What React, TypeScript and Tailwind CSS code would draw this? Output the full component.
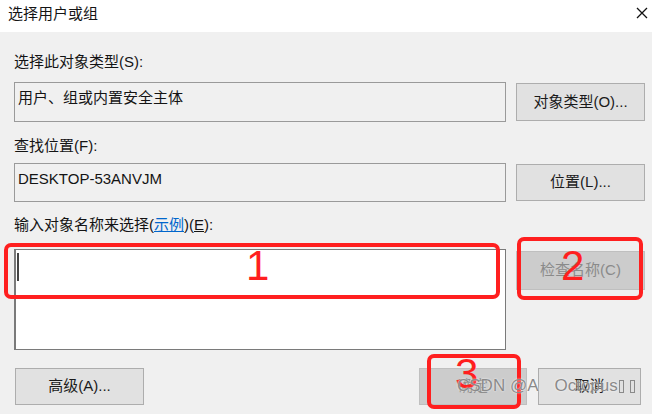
import React from "react";

const btn =
  "flex items-center justify-center border border-[#adadad] bg-[#e1e1e1] text-[15px] text-[#1a1a1a]";
const btnOff =
  "flex items-center justify-center border border-[#bfbfbf] bg-[#cccccc] text-[15px] text-[#8a8a8a]";
const roBox = "border border-[#9a9a9a] bg-[#f0f0f0] pl-[3px] pt-[5px] leading-[20px]";
const mark = "absolute border-4 border-[#ff1f1f] rounded-[7px]";
const num = "absolute text-[42px] leading-none text-[#ff1f1f]";

export default function App() {
  return (
    <div className="relative w-[652px] h-[414px] overflow-hidden bg-[#f0f0f0] font-['Liberation_Sans','Noto_Sans_CJK_SC',sans-serif] text-[15px] text-[#141414]">
      {/* title bar */}
      <div className="flex h-[32px] items-start justify-between bg-white pl-[8px] pr-[4px] pt-[4px]">
        <span className="leading-[20px]">选择用户或组</span>
        <svg width="12" height="12" viewBox="0 0 12 12" className="mt-[3px]">
          <path d="M1 1 L11 11 M11 1 L1 11" stroke="#111" strokeWidth="1.3" />
        </svg>
      </div>

      <div className="pl-[14px]">
        <div className="mt-[20px] leading-[20px]">选择此对象类型(S):</div>
        <div className="mt-[10px] flex items-center gap-[10px]">
          <div className={`w-[492px] h-[40px] ${roBox}`}>用户、组或内置安全主体</div>
          <button className={`w-[129px] h-[38px] ${btn}`}>对象类型(O)...</button>
        </div>

        <div className="mt-[14px] leading-[20px]">查找位置(F):</div>
        <div className="mt-[7px] flex items-center gap-[10px]">
          <div className={`w-[492px] h-[39px] ${roBox}`}>DESKTOP-53ANVJM</div>
          <button className={`w-[129px] h-[37px] ${btn}`}>位置(L)...</button>
        </div>

        <div className="mt-[13px] leading-[20px]">
          输入对象名称来选择(<span className="text-[#0066cc] underline">示例</span>)(<span className="underline">E</span>):
        </div>
        <div className="mt-[14px] flex items-start gap-[10px]">
          <div className="w-[492px] h-[101px] border border-[#7a7a7a] border-l-2 bg-white pl-[1px] pt-[3px]">
            <div className="w-[2px] h-[28px] bg-[#444]" />
          </div>
          <button disabled className={`mt-[2px] w-[129px] h-[39px] ${btnOff}`}>
            检查名称(C)
          </button>
        </div>

        <div className="mt-[18px] flex w-[627px] items-center">
          <button className={`ml-[1px] w-[129px] h-[37px] ${btn}`}>高级(A)...</button>
          <div className="ml-auto flex gap-[11px]">
            <button disabled className={`w-[108px] h-[37px] ${btnOff}`}>确定</button>
            <button className={`w-[103px] h-[37px] ${btn}`}>取消</button>
          </div>
        </div>
      </div>

      {/* annotations */}
      <div className={`${mark} left-[4px] top-[243px] w-[496px] h-[56px]`} />
      <div className={`${mark} left-[517px] top-[237px] w-[126px] h-[63px]`} />
      <div className={`${mark} left-[427px] top-[354px] w-[94px] h-[55px]`} />
      <span className={`${num} left-[246px] top-[245px]`}>1</span>
      <span className={`${num} left-[561px] top-[245px]`}>2</span>
      <span className={`${num} left-[455px] top-[353px]`}>3</span>

      {/* watermark */}
      <div className="absolute left-[457px] top-[376px] flex items-center text-[17px] leading-[20px] text-[#8a8a8a] [text-shadow:0_0_2px_#fff]">
        <span>CSDN @A</span>
        <span className="ml-[16px]">Octopus</span>
        <span className="ml-[1px] inline-block w-[5px] h-[13px] border border-[#8a8a8a]" />
        <span className="ml-[6px] inline-block w-[5px] h-[13px] border border-[#8a8a8a]" />
      </div>
    </div>
  );
}
